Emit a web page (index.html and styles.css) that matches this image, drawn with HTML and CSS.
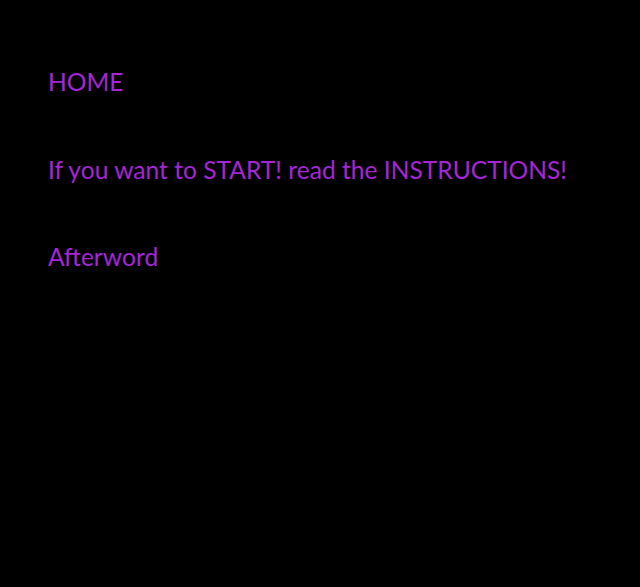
FILE: index.html
```html
<!DOCTYPE html>
<html>
<head>
<meta charset="utf-8">
<link rel="stylesheet" href="styles.css">
</head>
<body>
<nav class="menu">
  <a class="item" href="#">HOME</a>
  <a class="item" href="#">If you want to START! read the INSTRUCTIONS!</a>
  <a class="item" href="#">Afterword</a>
</nav>
</body>
</html>
```
FILE: styles.css
```css
html, body {
  margin: 0;
  padding: 0;
  background: #000;
  height: 100%;
}
.menu {
  display: flex;
  flex-direction: column;
  gap: 57.5px;
  padding: 67px 0 0 48px;
}
.item {
  font-family: "Lato", "Open Sans", sans-serif;
  font-size: 24.6px;
  line-height: 30px;
  color: #a526d9;
  text-decoration: none;
}
```
